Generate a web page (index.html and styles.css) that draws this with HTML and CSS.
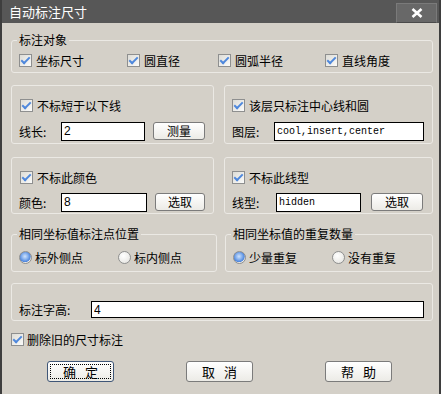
FILE: index.html
```html
<!DOCTYPE html>
<html lang="zh-CN">
<head>
    <meta charset="UTF-8">
    <title>自动标注尺寸</title>
    <link rel="stylesheet" href="styles.css">
</head>
<body>
    <div class="window">
        <div class="titlebar">
            <span class="title">自动标注尺寸</span>
            <span class="close">
                <svg width="12" height="10" viewBox="0 0 12 10"><path d="M1.5 1 L10.5 9 M10.5 1 L1.5 9" stroke="#fff" stroke-width="2.6"/></svg>
            </span>
        </div>

        <div class="content">
            <fieldset class="group objects">
                <legend>标注对象</legend>
                <div class="obj-row">
                    <label class="check"><span class="box"></span>坐标尺寸</label>
                    <label class="check"><span class="box"></span>圆直径</label>
                    <label class="check"><span class="box"></span>圆弧半径</label>
                    <label class="check"><span class="box"></span>直线角度</label>
                </div>
            </fieldset>

            <div class="pair">
                <div class="group panel">
                    <label class="check first"><span class="box"></span>不标短于以下线</label>
                    <div class="field-row">
                        <span class="field-label">线长:</span>
                        <input class="field w-len" type="text" value="2" readonly>
                        <button class="btn">测量</button>
                    </div>
                </div>
                <div class="group panel">
                    <label class="check"><span class="box"></span>该层只标注中心线和圆</label>
                    <div class="field-row">
                        <span class="field-label">图层:</span>
                        <input class="field mono w-layer" type="text" value="cool,insert,center" readonly>
                    </div>
                </div>
            </div>

            <div class="pair pair-b">
                <div class="group panel">
                    <label class="check first"><span class="box"></span>不标此颜色</label>
                    <div class="field-row">
                        <span class="field-label">颜色:</span>
                        <input class="field w-color" type="text" value="8" readonly>
                        <button class="btn">选取</button>
                    </div>
                </div>
                <div class="group panel">
                    <label class="check"><span class="box"></span>不标此线型</label>
                    <div class="field-row">
                        <span class="field-label wide">线型:</span>
                        <input class="field mono w-type" type="text" value="hidden" readonly>
                        <button class="btn far">选取</button>
                    </div>
                </div>
            </div>

            <div class="pair pair-radio">
                <fieldset class="group choice">
                    <legend>相同坐标值标注点位置</legend>
                    <div class="radio-row">
                        <label class="radio"><span class="dot on"></span>标外侧点</label>
                        <label class="radio"><span class="dot"></span>标内侧点</label>
                    </div>
                </fieldset>
                <fieldset class="group choice">
                    <legend>相同坐标值的重复数量</legend>
                    <div class="radio-row">
                        <label class="radio"><span class="dot on"></span>少量重复</label>
                        <label class="radio"><span class="dot"></span>没有重复</label>
                    </div>
                </fieldset>
            </div>

            <div class="group height">
                <span class="field-label long">标注字高:</span>
                <input class="field w-height" type="text" value="4" readonly>
            </div>

            <label class="check delete"><span class="box"></span>删除旧的尺寸标注</label>

            <div class="actions">
                <button class="btn big default">确 定</button>
                <button class="btn big">取 消</button>
                <button class="btn big">帮 助</button>
            </div>
        </div>
    </div>
</body>
</html>
```

FILE: styles.css
```css
* {
    box-sizing: border-box;
}
html, body {
    margin: 0;
    padding: 0;
}
body {
    font-family: "Noto Sans CJK SC", "Liberation Sans", sans-serif;
    font-size: 12px;
    color: #000;
    background: #d4d0c8;
}
.window {
    width: 441px;
    height: 394px;
    background: #d4d0c8;
    border-left: 2px solid #3e3e3e;
    border-right: 2px solid #3e3e3e;
    overflow: hidden;
}

/* title bar */
.titlebar {
    height: 23px;
    background: #575757;
    display: flex;
    justify-content: space-between;
    padding: 0 2px 0 7px;
}
.title {
    color: #fff;
    font-size: 13px;
    line-height: 23px;
}
.close {
    width: 41px;
    height: 20px;
    margin-top: 3px;
    background: #686868;
    border: 1px solid #7a7a7a;
    border-bottom-color: #4a4a4a;
    display: flex;
    align-items: center;
    justify-content: center;
}

.content {
    padding: 0 6px 0 9px;
}

/* frames */
.group {
    margin: 0;
    min-width: 0;
    border: 1px solid #ebe9e4;
    border-radius: 3px;
}
legend {
    font-size: 12px;
    line-height: 14px;
    padding: 0 2px;
    margin-left: -2px;
}
.objects {
    margin-top: 10px;
    padding: 5px 0 4px 7px;
}
.obj-row {
    display: grid;
    grid-template-columns: 108px 91px 107px auto;
}

/* check boxes */
.check {
    display: flex;
    align-items: center;
    height: 16px;
    white-space: nowrap;
}
.box {
    position: relative;
    width: 13px;
    height: 13px;
    margin-right: 4px;
    border: 1px solid #8e8f8f;
    background: linear-gradient(135deg, #dddcd6, #fbfbfa);
    flex: none;
}
.box::after {
    content: "";
    position: absolute;
    left: 3px;
    top: 0px;
    width: 3px;
    height: 7px;
    border-right: 2px solid #4f88dc;
    border-bottom: 2px solid #4f88dc;
    transform: rotate(45deg);
}
.check.first {
    margin-left: 1px;
}

/* paired panels */
.pair {
    display: grid;
    grid-template-columns: 203px 1fr;
    gap: 10px;
    margin-top: 12px;
}
.pair-b {
    margin-top: 13px;
}
.panel {
    padding: 11px 8px 2px 7px;
}
.pair-b .panel {
    padding-bottom: 1px;
}
.field-row {
    display: flex;
    align-items: center;
    height: 20px;
    margin-top: 8px;
}
.pair-b .field-row {
    margin-top: 7px;
}
.field-label {
    width: 42px;
    flex: none;
}
.field-label.wide {
    width: 44px;
}
.field-label.long {
    width: 72px;
}
.field {
    height: 19px;
    border: 1px solid #000;
    background: #fff;
    padding: 0 2px;
    font-family: "Liberation Sans", sans-serif;
    font-size: 12px;
    color: #000;
    outline: none;
}
.field.mono {
    font-family: "Liberation Mono", monospace;
    font-size: 10px;
}
.w-len { width: 84px; }
.w-layer { width: 150px; }
.w-color { width: 86px; }
.w-type { width: 85px; }

.btn {
    width: 52px;
    height: 18px;
    margin-left: 8px;
    padding: 0;
    border: 1px solid #7b7b7b;
    border-radius: 3px;
    background: linear-gradient(#ffffff, #ecebe6);
    font-family: "Noto Sans CJK SC", sans-serif;
    font-size: 12px;
    line-height: 16px;
    color: #000;
}
.btn.far {
    margin-left: 10px;
}

/* radio groups */
.pair-radio {
    grid-template-columns: 206px 1fr;
    gap: 8px;
    margin-top: 13px;
}
.choice {
    padding: 8px 0 6px 7px;
}
.radio-row {
    display: grid;
    grid-template-columns: 99px auto;
}
.radio {
    display: flex;
    align-items: center;
    height: 16px;
    white-space: nowrap;
}
.dot {
    width: 13px;
    height: 13px;
    margin-right: 3px;
    border: 1px solid #8e8f8f;
    border-radius: 50%;
    background: radial-gradient(circle at 40% 35%, #ffffff, #e2e1dc);
    flex: none;
}
.dot.on {
    background: radial-gradient(circle at 45% 40%, #cfe2fb 0, #86b1ee 35%, #4f86dc 60%, #e9e8e4 68%);
}

/* text height */
.height {
    display: flex;
    align-items: center;
    margin-top: 11px;
    padding: 17px 8px 2px 7px;
}
.w-height {
    flex: 1;
    height: 17px;
}

.delete {
    margin-top: 10px;
}
.delete .box {
    margin-right: 3px;
}

/* bottom buttons */
.actions {
    display: flex;
    gap: 72px;
    margin-top: 14px;
    padding-left: 36px;
}
.btn.big {
    width: 67px;
    height: 21px;
    margin-left: 0;
    font-size: 13px;
    word-spacing: 6px;
}
.btn.default {
    border-color: #3f5677;
    outline: 1px dotted #000;
    outline-offset: -4px;
}
```
